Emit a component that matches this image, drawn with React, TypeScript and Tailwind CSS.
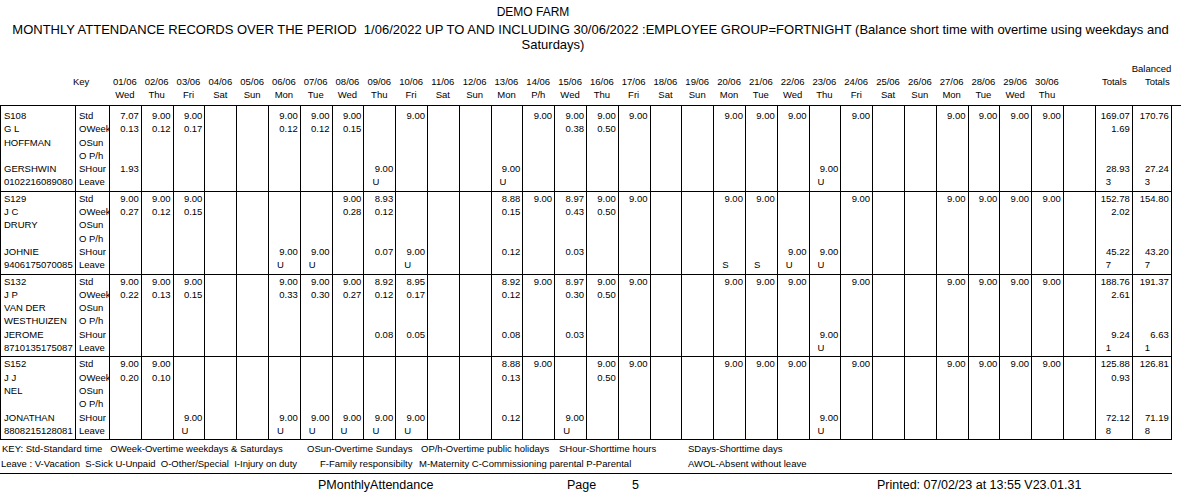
import { Fragment } from 'react';

type Day = Record<number, string>;

interface Employee {
  name: string[];
  std: Day;
  ow: Day;
  sh: Day;
  lv: Day;
  tot: [string, string, string, string];
  bal: [string, string, string];
}

const DAYS = [
  'Wed', 'Thu', 'Fri', 'Sat', 'Sun', 'Mon', 'Tue', 'Wed', 'Thu', 'Fri', 'Sat', 'Sun', 'Mon', 'P/h', 'Wed',
  'Thu', 'Fri', 'Sat', 'Sun', 'Mon', 'Tue', 'Wed', 'Thu', 'Fri', 'Sat', 'Sun', 'Mon', 'Tue', 'Wed', 'Thu',
];

const KEYS = ['Std', 'OWeek', 'OSun', 'O P/h', 'SHour', 'Leave'];

const nine = (days: number[], extra: Day = {}): Day => ({
  ...Object.fromEntries(days.map((d) => [d, '9.00'])),
  ...extra,
});

const EMPLOYEES: Employee[] = [
  {
    name: ['S108', 'G L', 'HOFFMAN', '', 'GERSHWIN', '0102216089080'],
    std: nine([2, 3, 6, 7, 8, 10, 14, 15, 16, 17, 20, 21, 22, 24, 27, 28, 29, 30], { 1: '7.07' }),
    ow: { 1: '0.13', 2: '0.12', 3: '0.17', 6: '0.12', 7: '0.12', 8: '0.15', 15: '0.38', 16: '0.50' },
    sh: nine([9, 13, 23], { 1: '1.93' }),
    lv: { 9: 'U', 13: 'U', 23: 'U' },
    tot: ['169.07', '1.69', '28.93', '3'],
    bal: ['170.76', '27.24', '3'],
  },
  {
    name: ['S129', 'J C', 'DRURY', '', 'JOHNIE', '9406175070085'],
    std: nine([1, 2, 3, 8, 14, 16, 17, 20, 21, 24, 27, 28, 29, 30], { 9: '8.93', 13: '8.88', 15: '8.97' }),
    ow: { 1: '0.27', 2: '0.12', 3: '0.15', 8: '0.28', 9: '0.12', 13: '0.15', 15: '0.43', 16: '0.50' },
    sh: nine([6, 7, 10, 22, 23], { 9: '0.07', 13: '0.12', 15: '0.03' }),
    lv: { 6: 'U', 7: 'U', 10: 'U', 20: 'S', 21: 'S', 22: 'U', 23: 'U' },
    tot: ['152.78', '2.02', '45.22', '7'],
    bal: ['154.80', '43.20', '7'],
  },
  {
    name: ['S132', 'J P', 'VAN DER', 'WESTHUIZEN', 'JEROME', '8710135175087'],
    std: nine([1, 2, 3, 6, 7, 8, 14, 16, 17, 20, 21, 22, 24, 27, 28, 29, 30], {
      9: '8.92',
      10: '8.95',
      13: '8.92',
      15: '8.97',
    }),
    ow: {
      1: '0.22', 2: '0.13', 3: '0.15', 6: '0.33', 7: '0.30', 8: '0.27',
      9: '0.12', 10: '0.17', 13: '0.12', 15: '0.30', 16: '0.50',
    },
    sh: nine([23], { 9: '0.08', 10: '0.05', 13: '0.08', 15: '0.03' }),
    lv: { 23: 'U' },
    tot: ['188.76', '2.61', '9.24', '1'],
    bal: ['191.37', '6.63', '1'],
  },
  {
    name: ['S152', 'J J', 'NEL', '', 'JONATHAN', '8808215128081'],
    std: nine([1, 2, 14, 16, 17, 20, 21, 22, 24, 27, 28, 29, 30], { 13: '8.88' }),
    ow: { 1: '0.20', 2: '0.10', 13: '0.13', 16: '0.50' },
    sh: nine([3, 6, 7, 8, 9, 10, 15, 23], { 13: '0.12' }),
    lv: { 3: 'U', 6: 'U', 7: 'U', 8: 'U', 9: 'U', 10: 'U', 15: 'U', 23: 'U' },
    tot: ['125.88', '0.93', '72.12', '8'],
    bal: ['126.81', '71.19', '8'],
  },
];

const COLS = 'grid grid-cols-[75px_34px_repeat(31,31.8px)_37px_39px]';

function Lines({ values, leavePad }: { values: string[]; leavePad: string }) {
  return (
    <>
      {values.map((v, i) => (
        <div
          key={i}
          className={`h-[13.3px] leading-[13.3px] whitespace-nowrap ${i === 5 ? `text-left ${leavePad}` : 'text-right pr-[2px]'}`}
        >
          {v}
        </div>
      ))}
    </>
  );
}

export default function App() {
  const days = Array.from({ length: 31 }, (_, i) => i + 1);

  return (
    <div className="w-[1181px] h-[496px] bg-white text-black font-['Liberation_Sans',Arial,sans-serif] overflow-hidden">
      {/* report title */}
      <div className="pt-[5px] w-[1066px] text-center text-[12px] leading-[15px]">DEMO FARM</div>
      <div className="mt-[2px] text-[13px] leading-[15px]">
        <div className="text-center whitespace-pre">
          MONTHLY ATTENDANCE RECORDS OVER THE PERIOD  1/06/2022 UP TO AND INCLUDING 30/06/2022 :EMPLOYEE GROUP=FORTNIGHT (Balance short time with overtime using weekdays and
        </div>
        <div className="w-[1106px] text-center">Saturdays)</div>
      </div>

      {/* column headings */}
      <div className={`${COLS} mt-[10px] text-[9.5px] leading-[13px]`}>
        <div className="col-span-33" />
        <div />
        <div className="text-right pr-[1px]">Balanced</div>

        <div />
        <div className="-ml-[2px]">Key</div>
        {days.map((d) => (
          <div key={d} className="text-center">
            {d <= 30 ? `${String(d).padStart(2, '0')}/06` : ''}
          </div>
        ))}
        <div className="text-right pr-[5px]">Totals</div>
        <div className="text-right pr-[1px]">Totals</div>

        <div />
        <div />
        {days.map((d) => (
          <div key={d} className="text-center">
            {d <= 30 ? DAYS[d - 1] : ''}
          </div>
        ))}
        <div />
        <div />
      </div>

      {/* attendance table */}
      <div className={`${COLS} mt-[4px] border-t border-l border-black text-[9.5px]`}>
        {EMPLOYEES.map((e, i) => {
          const pad = `${i === 0 ? 'pt-[3px]' : 'pt-0'} pb-[2px] border-r border-b border-black`;
          return (
            <Fragment key={e.name[0]}>
              <div className={`${pad} pl-[3px]`}>
                {e.name.map((n, j) => (
                  <div key={j} className="h-[13.3px] leading-[13.3px] whitespace-nowrap">
                    {n}
                  </div>
                ))}
              </div>
              <div className={`${pad} pl-[3px] overflow-hidden`}>
                {KEYS.map((k) => (
                  <div key={k} className="h-[13.3px] leading-[13.3px] whitespace-nowrap">
                    {k}
                  </div>
                ))}
              </div>
              {days.map((d) => (
                <div key={d} className={pad}>
                  <Lines
                    values={[e.std[d] ?? '', e.ow[d] ?? '', '', '', e.sh[d] ?? '', e.lv[d] ?? '']}
                    leavePad="pl-[8px]"
                  />
                </div>
              ))}
              <div className={pad}>
                <Lines values={[e.tot[0], e.tot[1], '', '', e.tot[2], e.tot[3]]} leavePad="pl-[10px]" />
              </div>
              <div className={pad}>
                <Lines values={[e.bal[0], '', '', '', e.bal[1], e.bal[2]]} leavePad="pl-[12px]" />
              </div>
            </Fragment>
          );
        })}
      </div>

      {/* legend */}
      <div className="w-[1172px] pt-[2px] pb-[2px] text-[9.5px] leading-[14.5px] whitespace-pre border-b border-black">
        <div className="flex">
          <span className="w-[307px] shrink-0 pl-[2px]">KEY: Std-Standard time   OWeek-Overtime weekdays &amp; Saturdays</span>
          <span className="w-[114px] shrink-0">OSun-Overtime Sundays</span>
          <span className="w-[138px] shrink-0">OP/h-Overtime public holidays</span>
          <span className="w-[129px] shrink-0">SHour-Shorttime hours</span>
          <span>SDays-Shorttime days</span>
        </div>
        <div className="flex">
          <span className="w-[320px] shrink-0 pl-[1px]">Leave : V-Vacation  S-Sick U-Unpaid  O-Other/Special  I-Injury on duty</span>
          <span className="w-[99px] shrink-0">F-Family responsibilty</span>
          <span className="w-[269px] shrink-0">M-Maternity C-Commissioning parental P-Parental</span>
          <span>AWOL-Absent without leave</span>
        </div>
      </div>

      {/* page footer */}
      <div className="flex pt-[4px] text-[12.5px] leading-[15px] whitespace-nowrap">
        <span className="w-[318px] shrink-0" />
        <span className="w-[249px] shrink-0">PMonthlyAttendance</span>
        <span className="w-[65px] shrink-0">Page</span>
        <span className="w-[245px] shrink-0">5</span>
        <span>Printed: 07/02/23 at 13:55 V23.01.31</span>
      </div>
    </div>
  );
}
